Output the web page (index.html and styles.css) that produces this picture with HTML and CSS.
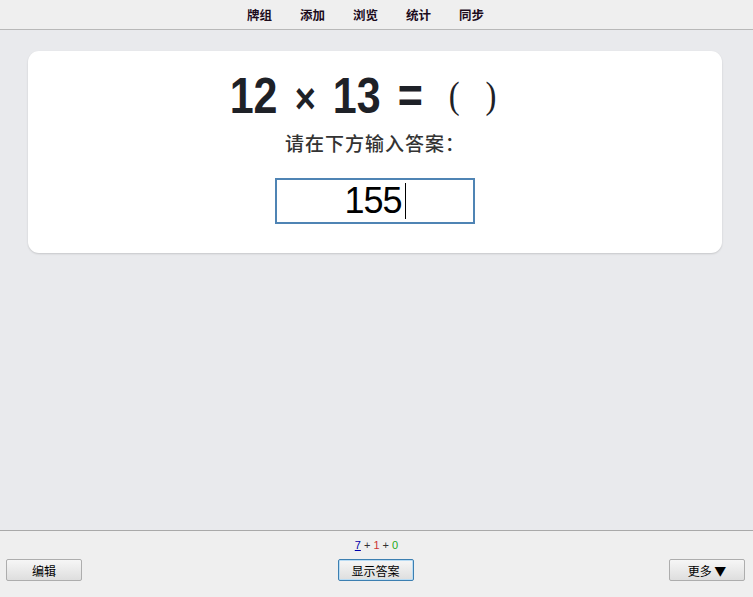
FILE: index.html
```html
<!DOCTYPE html>
<html lang="zh">
  <head>
    <meta charset="UTF-8" />
    <title>Anki</title>
    <link rel="stylesheet" href="styles.css">
  </head>
  <body>
    <div class="topbar">
      <a href="#">牌组</a>
      <a href="#">添加</a>
      <a href="#">浏览</a>
      <a href="#">统计</a>
      <a href="#">同步</a>
    </div>
    <div class="main">
      <div class="card">
        <div class="question">12 <span class="times">×</span> 13 =<span class="paren open">(</span><span class="paren close">)</span></div>
        <div class="prompt">请在下方输入答案：</div>
        <div class="answer"><span class="typed">155</span><span class="caret"></span></div>
      </div>
    </div>
    <div class="bottombar">
      <div class="counts"><u class="new">7</u> + <span class="learn">1</span> + <span class="review">0</span></div>
      <div class="buttons">
        <button class="btn">编辑</button>
        <button class="btn focus">显示答案</button>
        <button class="btn">更多 ▼</button>
      </div>
    </div>
  </body>
</html>
```

FILE: styles.css
```css
body {
  margin: 0;
  height: 100vh;
  display: flex;
  flex-direction: column;
  font-family: "Liberation Sans", "Noto Sans CJK SC", sans-serif;
  background: #e9eaed;
}
.topbar {
  height: 29px;
  background: #efefef;
  border-bottom: 1px solid #b8b8b8;
  display: flex;
  justify-content: center;
  align-items: center;
  gap: 28px;
  padding-right: 22px;
}
.topbar a {
  color: #1c0b1c;
  text-decoration: none;
  font-weight: bold;
  font-size: 12.5px;
}
.main {
  flex: 1;
  padding: 21px 31px 0 28px;
}
.card {
  background: #fff;
  border-radius: 11px;
  box-shadow: 0 1px 2px rgba(0, 0, 0, 0.15);
  height: 202px;
  display: flex;
  flex-direction: column;
  align-items: center;
}
.question {
  margin-top: 16px;
  font-size: 50px;
  font-weight: bold;
  color: #1e2127;
  line-height: 56px;
  margin-right: 24px;
  word-spacing: 6px;
  transform: scaleX(0.86);
}
.times {
  font-size: 42px;
}
.paren {
  font-family: "Liberation Serif", serif;
  font-weight: normal;
  font-size: 38px;
  vertical-align: 5px;
}
.paren.open { margin-left: 30px; }
.paren.close { margin-left: 30px; }
.prompt {
  margin-top: 3px;
  font-family: "Noto Sans CJK SC", serif;
  font-size: 19px;
  font-weight: 500;
  letter-spacing: 1px;
  color: #333;
  line-height: 26px;
}
.answer {
  margin-top: 22px;
  width: 196px;
  height: 42px;
  border: 2px solid #4f84b4;
  display: flex;
  justify-content: center;
  align-items: center;
  font-size: 36px;
  letter-spacing: -1px;
  color: #000;
}
.caret {
  display: inline-block;
  width: 1px;
  height: 36px;
  background: #000;
  margin-left: 3px;
}
.bottombar {
  height: 66px;
  background: #efefef;
  border-top: 1px solid #a9a9a9;
}
.counts {
  text-align: center;
  font-size: 11px;
  color: #333;
  margin-top: 8px;
  line-height: 13px;
}
.new { color: #00a; }
.learn { color: #c33; }
.review { color: #2a2; }
.buttons {
  display: flex;
  justify-content: space-between;
  padding: 0 8px 0 6px;
  margin-top: 7px;
}
.btn {
  width: 76px;
  height: 22px;
  font-family: "Noto Sans CJK SC", sans-serif;
  font-size: 12px;
  color: #000;
  background: linear-gradient(#f6f6f6, #dedede);
  border: 1px solid #adadad;
  border-radius: 2px;
  padding: 0;
}
.btn.focus {
  border: 1px solid #3c7fb1;
  box-shadow: inset 0 0 0 1px #b9dcf4;
}
```
